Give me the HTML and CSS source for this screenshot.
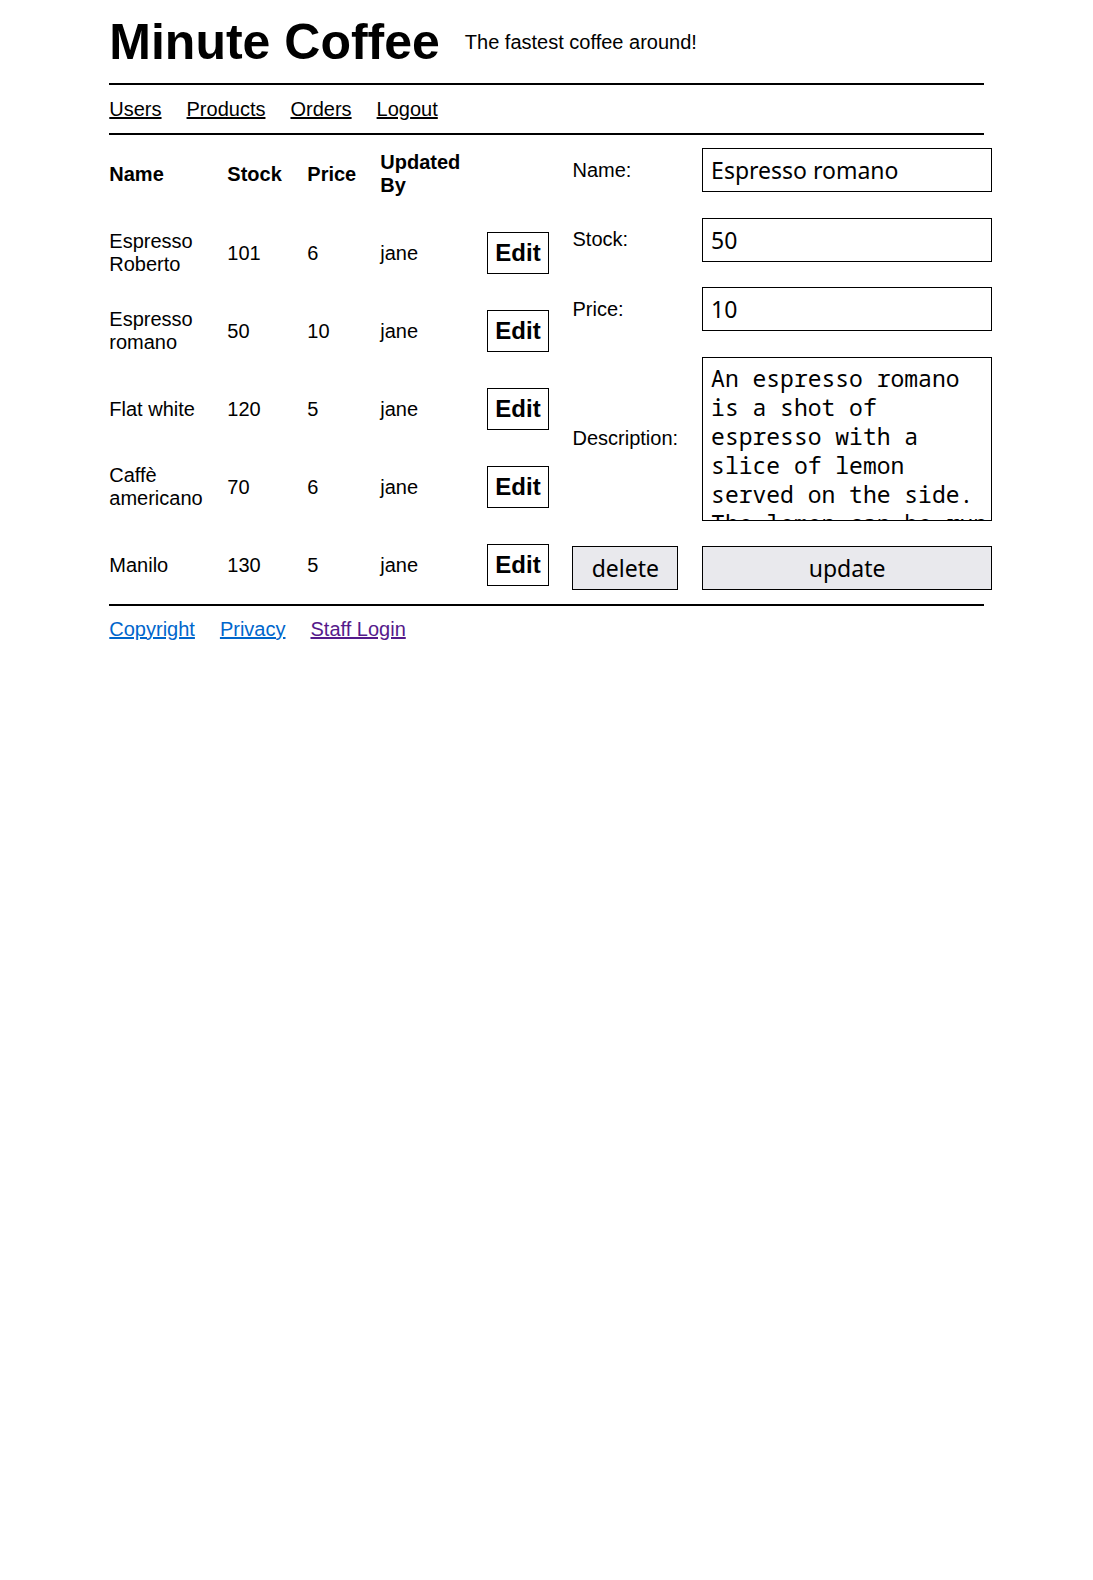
FILE: index.html
```html
<!DOCTYPE html>
<html lang="en">
<head>
<meta charset="utf-8">
<title>Minute Coffee</title>
<link rel="stylesheet" href="styles.css">
</head>
<body>
<div class="page">
  <header class="masthead">
    <h1 class="title">Minute Coffee</h1>
    <span class="tagline">The fastest coffee around!</span>
  </header>
  <nav class="mainnav">
    <a href="#">Users</a>
    <a href="#">Products</a>
    <a href="#">Orders</a>
    <a href="#">Logout</a>
  </nav>
  <main class="content">
    <table class="products">
      <colgroup>
        <col class="col-name">
        <col class="col-stock">
        <col class="col-price">
        <col class="col-user">
        <col class="col-edit">
      </colgroup>
      <thead>
        <tr><th>Name</th><th>Stock</th><th>Price</th><th>Updated By</th><th></th></tr>
      </thead>
      <tbody>
        <tr><td>Espresso Roberto</td><td>101</td><td>6</td><td>jane</td><td><button class="edit-btn" type="button">Edit</button></td></tr>
        <tr><td>Espresso romano</td><td>50</td><td>10</td><td>jane</td><td><button class="edit-btn" type="button">Edit</button></td></tr>
        <tr><td>Flat white</td><td>120</td><td>5</td><td>jane</td><td><button class="edit-btn" type="button">Edit</button></td></tr>
        <tr><td>Caffè americano</td><td>70</td><td>6</td><td>jane</td><td><button class="edit-btn" type="button">Edit</button></td></tr>
        <tr><td>Manilo</td><td>130</td><td>5</td><td>jane</td><td><button class="edit-btn" type="button">Edit</button></td></tr>
      </tbody>
    </table>
    <form class="editor">
      <label class="field-label" for="f-name">Name:</label>
      <input class="field-input" id="f-name" type="text" value="Espresso romano">
      <label class="field-label" for="f-stock">Stock:</label>
      <input class="field-input" id="f-stock" type="text" value="50">
      <label class="field-label" for="f-price">Price:</label>
      <input class="field-input" id="f-price" type="text" value="10">
      <label class="field-label" for="f-desc">Description:</label>
      <textarea class="field-area" id="f-desc">An espresso romano is a shot of espresso with a slice of lemon served on the side. The lemon can be run along the rim of the cup for extra flavour.</textarea>
      <button class="form-btn" type="button">delete</button>
      <button class="form-btn" type="button">update</button>
    </form>
  </main>
  <footer class="foot">
    <a class="foot-link" href="#">Copyright</a>
    <a class="foot-link" href="#">Privacy</a>
    <a class="foot-link visited" href="#">Staff Login</a>
  </footer>
</div>
</body>
</html>
```
FILE: styles.css
```css
html, body {
  margin: 0;
  padding: 0;
  background: #fff;
}
body {
  font-family: "Liberation Sans", Arial, sans-serif;
  font-size: 20px;
  color: #000;
}
.page {
  width: 80%;
  margin: 0 auto;
}
.masthead {
  display: flex;
  align-items: center;
  gap: 25px;
  padding: 13px 0 12px;
  border-bottom: 2px solid #000;
}
.title {
  margin: 0;
  font-size: 50px;
  font-weight: bold;
  line-height: normal;
}
.tagline {
  font-size: 20px;
}
.mainnav {
  display: flex;
  gap: 25px;
  padding: 13px 0 12px;
  border-bottom: 2px solid #000;
}
.mainnav a {
  color: #000;
  text-decoration: underline;
}
.content {
  display: grid;
  grid-template-columns: minmax(0, 1fr) minmax(0, 1fr);
  align-items: center;
}
.products {
  table-layout: fixed;
  width: 440px;
  border-collapse: collapse;
}
.col-name { width: 118px; }
.col-stock { width: 80px; }
.col-price { width: 73px; }
.col-user { width: 107px; }
.col-edit { width: 62px; }
.products th,
.products td {
  text-align: left;
  vertical-align: middle;
  padding: 16px 24px 16px 0;
}
.products th {
  font-weight: bold;
  padding-bottom: 17px;
}
.products th:last-child,
.products td:last-child {
  padding-right: 0;
}
.edit-btn {
  display: inline-block;
  margin: 2px 0;
  padding: 6px 7px;
  font-family: "Liberation Sans", Arial, sans-serif;
  font-size: 24px;
  font-weight: bold;
  line-height: 28px;
  color: #000;
  background: #fff;
  border: 1px solid #000;
  vertical-align: middle;
}
.editor {
  align-self: start;
  display: grid;
  grid-template-columns: auto 290px;
  column-gap: 24px;
  row-gap: 25.5px;
  align-items: center;
  padding: 13px 0 0 26px;
}
.field-label {
  font-size: 20px;
}
.field-input,
.form-btn {
  box-sizing: border-box;
  margin: 0;
  font-family: "Noto Sans", "Open Sans", sans-serif;
  font-size: 23px;
  line-height: normal;
  color: #000;
  border: 1px solid #000;
}
.field-input {
  width: 100%;
  padding: 5px 5px 5px 8px;
  background: #fff;
}
.field-area {
  box-sizing: border-box;
  width: 100%;
  height: 164px;
  margin: 0;
  padding: 6px 2px 0 8px;
  font-family: "Noto Sans Mono", "DejaVu Sans Mono", monospace;
  font-size: 23px;
  line-height: 29px;
  color: #000;
  background: #fff;
  border: 1px solid #000;
  overflow: hidden;
  resize: none;
}
.form-btn {
  width: 100%;
  padding: 5px 6px;
  background: #e9e9ed;
  text-align: center;
}
.foot {
  display: flex;
  gap: 25px;
  padding: 12px 0;
  border-top: 2px solid #000;
}
.foot-link {
  color: #0066cc;
  text-decoration: underline;
}
.foot-link.visited {
  color: #551a8b;
}
```
